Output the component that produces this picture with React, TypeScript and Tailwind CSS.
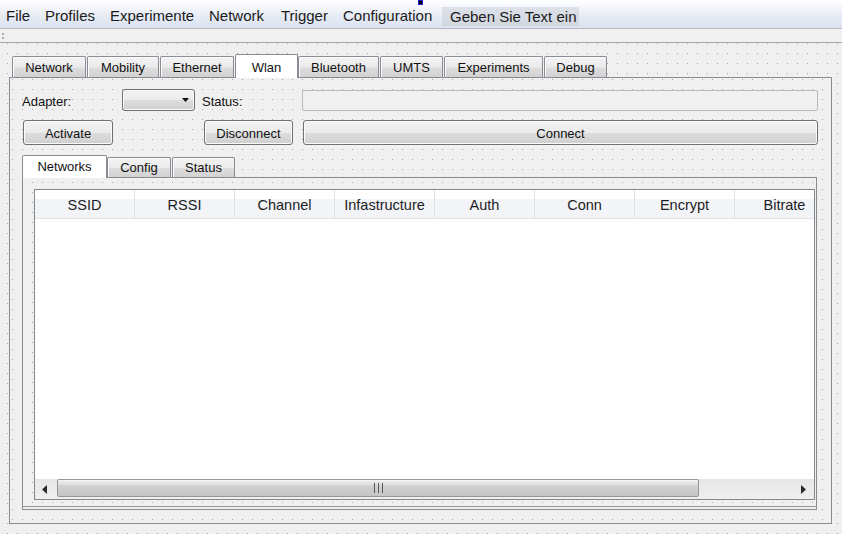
import React from 'react';

const menuItems = [
  { label: 'File', cls: 'w-[38px] pl-[6px]' },
  { label: 'Profiles', cls: 'w-[65px] pl-[7px]' },
  { label: 'Experimente', cls: 'w-[99px] pl-[7px]' },
  { label: 'Network', cls: 'w-[72px] pl-[7px]' },
  { label: 'Trigger', cls: 'w-[62px] pl-[7px]' },
  { label: 'Configuration', cls: 'w-[106px] pl-[7px]' },
];

const mainTabs = [
  { label: 'Network', cls: 'w-[74px]' },
  { label: 'Mobility', cls: 'w-[72px] ml-px' },
  { label: 'Ethernet', cls: 'w-[74px] ml-px' },
  { label: 'Wlan', cls: 'w-[63px] ml-px', selected: true },
  { label: 'Bluetooth', cls: 'w-[81px]' },
  { label: 'UMTS', cls: 'w-[63px] ml-px' },
  { label: 'Experiments', cls: 'w-[99px] ml-px' },
  { label: 'Debug', cls: 'w-[63px] ml-px' },
];

const columns = ['SSID', 'RSSI', 'Channel', 'Infastructure', 'Auth', 'Conn', 'Encrypt', 'Bitrate'];

function Tab({ label, selected, cls, small }: { label: string; selected?: boolean; cls: string; small?: boolean }) {
  if (selected) {
    return (
      <div
        className={`relative z-10 -mb-px ${small ? 'h-[23px]' : 'h-[24px] pt-[2px]'} bg-white border border-b-0 border-[#898c95] rounded-t-[2px] flex items-center justify-center ${cls}`}
      >
        {label}
      </div>
    );
  }
  return (
    <div
      className={`${small ? 'h-[20px]' : 'h-[21px] pt-[2px]'} border border-b-0 border-[#898c95] rounded-t-[2px] shadow-[inset_1px_1px_0_#fbfbfb] bg-[linear-gradient(to_bottom,#f3f3f3_0%,#ebebeb_50%,#dddddd_55%,#d2d2d2_100%)] flex items-center justify-center ${cls}`}
    >
      {label}
    </div>
  );
}

function Button({ label, cls }: { label: string; cls: string }) {
  return (
    <div
      className={`h-[25px] pt-[2px] rounded-[3px] border border-[#707070] shadow-[inset_0_0_0_1px_#fafafa] bg-[linear-gradient(to_bottom,#f2f2f2_0%,#ebebeb_50%,#dddddd_52%,#cfcfcf_100%)] flex items-center justify-center ${cls}`}
    >
      {label}
    </div>
  );
}

export default function App() {
  return (
    <div className="relative w-[842px] h-[534px] overflow-hidden bg-[#f0f0f0] font-['Liberation_Sans',Arial,sans-serif] text-[#111]">
      {/* Menu bar */}
      <div className="h-[28px] flex bg-[linear-gradient(to_bottom,#ffffff_0%,#f5f7fb_25%,#e7ecf5_55%,#dbe2f0_100%)] text-[15px] leading-[17px] text-[#1b1b1b]">
        {menuItems.map((m) => (
          <div key={m.label} className={`h-full flex items-center pt-[3px] whitespace-nowrap ${m.cls}`}>
            {m.label}
          </div>
        ))}
        <div className="mt-[7px] h-[19px] w-[137px] pl-[8px] flex items-center whitespace-nowrap bg-[linear-gradient(to_bottom,#dde1e8,#d2d6df)]">
          Geben Sie Text ein
        </div>
      </div>
      <div className="h-px bg-[#b4b9c3]" />

      {/* designer marker */}
      <div className="absolute left-[418px] top-0 w-[5px] h-[5px] bg-black border border-[#1a1ad0]" />

      {/* Toolbar */}
      <div className="h-[14px] border-b border-[#a9a9a9] pl-[2px] pt-[4px] flex flex-col gap-[2px]">
        <div className="w-[2px] h-[2px] bg-[#b0b0b0]" />
        <div className="w-[2px] h-[2px] bg-[#b0b0b0]" />
      </div>

      {/* Form with designer grid */}
      <div className="h-[491px] pt-[11px] pl-[9px] bg-[conic-gradient(at_1px_1px,transparent_75%,#a3a3a3_0)] bg-size-[10px_10px] bg-position-[7px_0px] text-[13px]">
        {/* Main tab bar */}
        <div className="h-[23px] flex items-end pl-[3px]">
          {mainTabs.map((t) => (
            <Tab key={t.label} label={t.label} cls={t.cls} selected={t.selected} />
          ))}
        </div>

        {/* Main tab pane */}
        <div className="w-[823px] h-[447px] border border-[#898c95] pl-[12px] pr-[13px] pt-[11px] pb-[13px] flex flex-col bg-[#f0f0f0] bg-[conic-gradient(at_1px_1px,transparent_75%,#a3a3a3_0)] bg-size-[10px_10px] bg-position-[2px_1px]">
          {/* Adapter row */}
          <div className="h-[22px] flex items-center">
            <span className="w-[100px] pt-[3px]">Adapter:</span>
            <div className="relative w-[73px] h-[22px] rounded-[3px] border border-[#707070] shadow-[inset_0_0_0_1px_#fafafa] bg-[linear-gradient(to_bottom,#f2f2f2_0%,#ebebeb_50%,#dddddd_52%,#cfcfcf_100%)] flex items-center justify-end pr-[5px]">
              <svg width="7" height="4" viewBox="0 0 7 4">
                <polygon points="0,0 7,0 3.5,4" fill="#111" />
              </svg>
            </div>
            <span className="ml-[7px] w-[100px] pt-[3px]">Status:</span>
            <div className="flex-1 h-[21px] rounded-[2px] border border-[#b8bbc2] bg-[#f0f0f0]" />
          </div>

          {/* Button row */}
          <div className="mt-[9px] h-[25px] flex">
            <Button label="Activate" cls="ml-px w-[90px]" />
            <Button label="Disconnect" cls="ml-[91px] w-[89px]" />
            <Button label="Connect" cls="ml-[10px] flex-1" />
          </div>

          {/* Inner tab widget */}
          <div className="mt-[10px] h-[22px] flex items-end">
            <Tab label="Networks" cls="w-[85px]" selected small />
            <Tab label="Config" cls="w-[64px]" small />
            <Tab label="Status" cls="w-[63px] ml-px" small />
          </div>
          <div className="w-[795px] h-[333px] border border-[#898c95] pt-[11px] pl-[11px] bg-[#f0f0f0] bg-[conic-gradient(at_1px_1px,transparent_75%,#a3a3a3_0)] bg-size-[10px_10px] bg-position-[9px_4px] shadow-[inset_0_-2px_0_#f0f0f0,inset_0_-3px_0_#9a9a9a]">
            {/* Table */}
            <div className="w-[781px] h-[311px] border border-[#828790] bg-white flex flex-col overflow-hidden">
              <div className="h-[29px] flex shrink-0 border-b border-[#e3e3e3] bg-[linear-gradient(to_bottom,#ffffff_0px,#ffffff_9px,#f3f4f7_9px,#f3f4f7_100%)] text-[14.5px] text-[#1c1c24]">
                {columns.map((c) => (
                  <div
                    key={c}
                    className="w-[100px] shrink-0 border-r border-[#dfe2e7] flex items-center justify-center pt-[3px] whitespace-nowrap"
                  >
                    {c}
                  </div>
                ))}
              </div>
              <div className="flex-1 bg-white" />
              {/* Horizontal scrollbar */}
              <div className="h-[20px] shrink-0 flex bg-[linear-gradient(to_bottom,#e6e6e6,#efefef)]">
                <div className="w-[22px] flex items-center justify-center pr-[4px]">
                  <svg width="5" height="9" viewBox="0 0 5 9">
                    <polygon points="5,0 0,4.5 5,9" fill="#2a2a2a" />
                  </svg>
                </div>
                <div className="w-[642px] h-[18px] rounded-[2px] border border-[#979797] shadow-[inset_0_1px_0_#f4f4f4] bg-[linear-gradient(to_bottom,#ececec_0%,#e0e0e0_30%,#d0d0d0_36%,#c6c6c6_100%)] flex items-center justify-center gap-[3px]">
                  <div className="w-px h-[10px] bg-[#555]" />
                  <div className="w-px h-[10px] bg-[#555]" />
                  <div className="w-px h-[10px] bg-[#555]" />
                </div>
                <div className="flex-1" />
                <div className="w-[22px] flex items-center justify-center">
                  <svg width="5" height="9" viewBox="0 0 5 9">
                    <polygon points="0,0 5,4.5 0,9" fill="#2a2a2a" />
                  </svg>
                </div>
              </div>
            </div>
          </div>
        </div>
      </div>
    </div>
  );
}
